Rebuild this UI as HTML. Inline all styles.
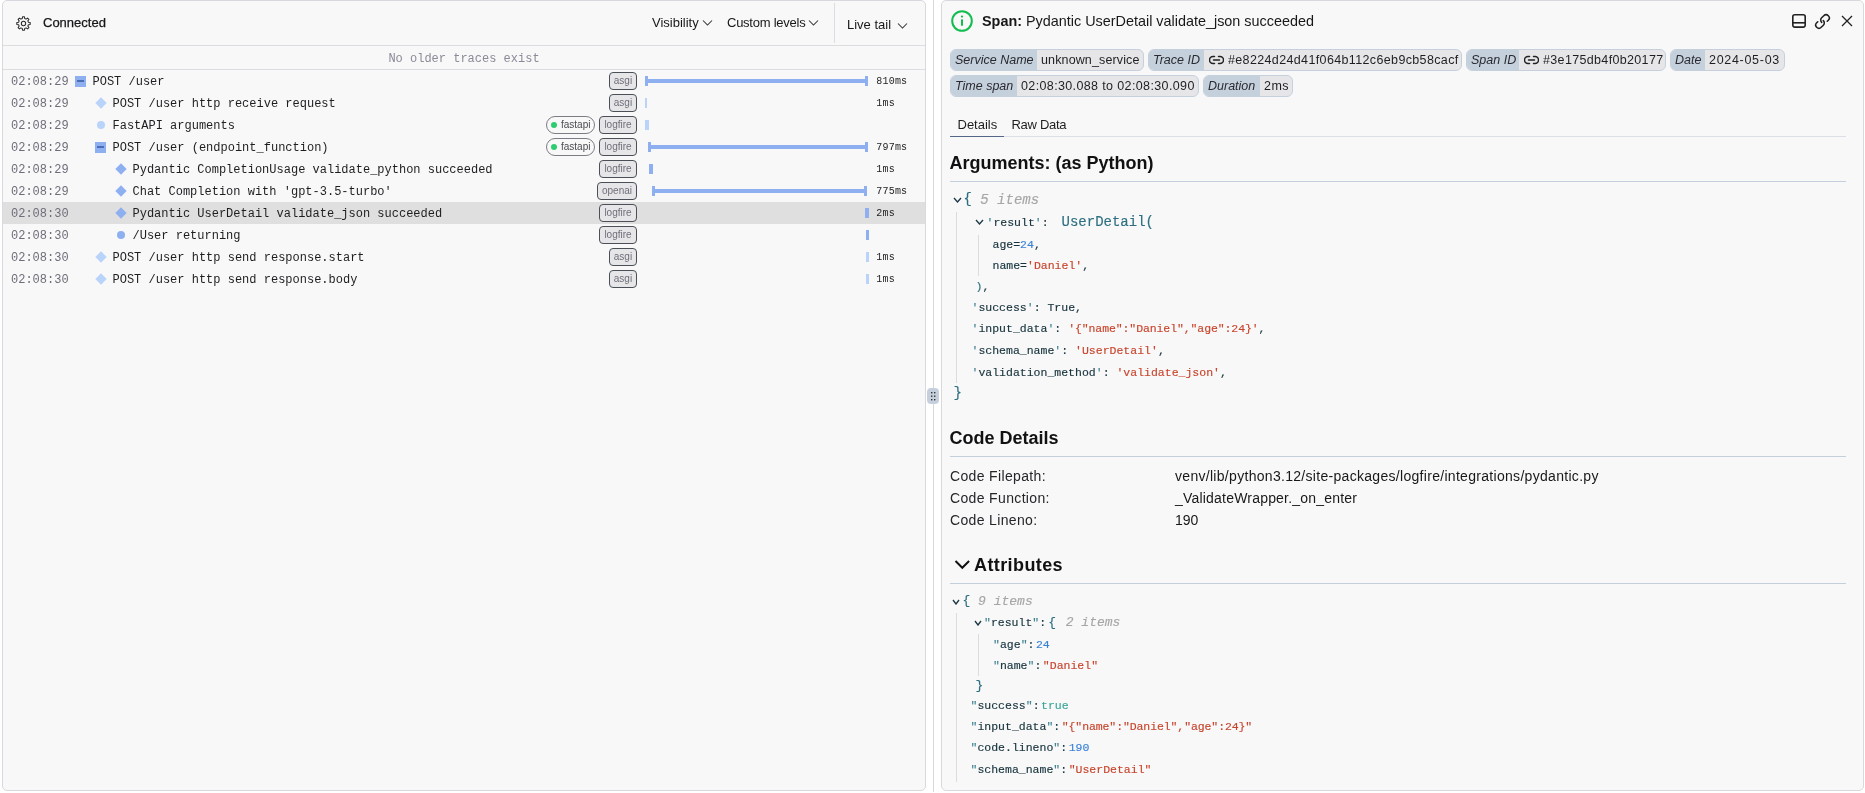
<!DOCTYPE html>
<html><head><meta charset="utf-8">
<style>
*{box-sizing:border-box;margin:0;padding:0}
html,body{width:1865px;height:793px;overflow:hidden;background:#fff;font-family:"Liberation Sans",sans-serif;color:#1b1b1f;position:relative}
.abs{position:absolute}
.panel{position:absolute;top:0;height:791px;background:#f8f8f8;border:1px solid #d8d8de;border-radius:5px}
#lp{left:2px;width:924px}
#rp{left:941px;width:923px}
.t{position:absolute;white-space:nowrap}
.hl{position:absolute;height:1px;background:#dcdce2}
/* left */
.older{position:absolute;left:3px;top:48px;width:922px;height:23px;text-align:center;font-family:"Liberation Mono",monospace;font-size:12px;line-height:23px;color:#8a8a98}
.row{position:absolute;left:3px;width:922px;height:22px}
.row.sel{background:#dfdfdf}
.ts{position:absolute;left:8px;top:1px;line-height:22px;font-family:"Liberation Mono",monospace;font-size:12px;color:#6e6e7a}
.nm{position:absolute;top:1px;line-height:22px;font-family:"Liberation Mono",monospace;font-size:12px;color:#1e1e22;white-space:nowrap}
.sq{position:absolute;top:6px;width:11px;height:11px;background:#8fb0f0}
.sq:after{content:"";position:absolute;left:2px;top:4px;width:7px;height:2px;background:#4a6fb8}
.dia{position:absolute;top:6.6px;width:8px;height:8px;transform:rotate(45deg)}
.cir{position:absolute;top:7px;width:8px;height:8px;border-radius:50%}
.lt{background:#b9d3fb}
.md{background:#8fb0f0}
.tag{position:absolute;top:2px;height:18px;border:1px solid #4b5058;border-radius:4px;background:#e6e6e9;color:#6f6f78;font-size:10px;line-height:16px;text-align:center}
.pill{position:absolute;top:2px;height:18px;border:1px solid #7c7c84;border-radius:9px;color:#4a4a50;font-size:10px;line-height:16px;padding:0 0 0 14px}
.pill:before{content:"";position:absolute;left:4px;top:5px;width:6px;height:6px;border-radius:50%;background:#2ecc71}
.bar{position:absolute}
.dur{position:absolute;left:873.3px;top:1px;line-height:22px;font-family:"Liberation Mono",monospace;font-size:10px;color:#1f1f22;letter-spacing:0.2px}
/* right */
.chip{position:absolute;height:22px;border:1px solid #c5d0dd;border-radius:6px;background:#e6e6e8;overflow:hidden;font-size:12.5px;line-height:20px;white-space:nowrap;color:#1f1f23}
.chip .lb{position:absolute;left:0;top:0;height:20px;background:#c5d0dd;font-style:italic;color:#2a2a30}
.chip .vl{position:absolute;top:0;height:20px}
.h2{position:absolute;left:950px;font-size:18px;font-weight:bold;color:#111114;white-space:nowrap}
.sep{position:absolute;left:950px;width:896px;height:1px;background:#c3cfdc}
.code{font-family:"Liberation Mono",monospace;white-space:nowrap;position:absolute;-webkit-text-stroke:0.15px currentColor}
.k{color:#17333d}
.q{color:#3f8191}
.s{color:#c8452d}
.n{color:#3b82d6}
.b{color:#2d6f80}
.m{color:#a6a6a6;font-style:italic;position:relative;top:0.7px}
.py{color:#284a57}
.tr{color:#3aa59a}
.guide{position:absolute;width:1px;background:#dcdce0}
</style></head>
<body>
<div id="wrap" style="position:absolute;left:0;top:0;width:1865px;height:793px;will-change:transform">
<div class="panel" id="lp"></div>
<div class="panel" id="rp"></div>
<div class="abs" style="left:933px;top:0;width:1px;height:792px;background:#d8d8de"></div>
<div class="abs" style="left:927px;top:388px;width:12px;height:16px;border-radius:4px;background:#c6d0dc"></div>
<svg class="abs" style="left:927px;top:388px" width="12" height="16"><g fill="#333"><rect x="4" y="4" width="1.4" height="1.4"/><rect x="7" y="4" width="1.4" height="1.4"/><rect x="4" y="7.5" width="1.4" height="1.4"/><rect x="7" y="7.5" width="1.4" height="1.4"/><rect x="4" y="11" width="1.4" height="1.4"/><rect x="7" y="11" width="1.4" height="1.4"/></g></svg>

<!-- left header -->
<svg class="abs" style="left:16px;top:16px" width="15" height="15" viewBox="0 0 16 16"><path fill="none" stroke="#2a2a2e" stroke-width="1.1" stroke-linejoin="round" d="M15.13 6.99 L15.13 9.01 L13.23 9.34 L12.65 10.75 L13.76 12.32 L12.32 13.76 L10.75 12.65 L9.34 13.23 L9.01 15.13 L6.99 15.13 L6.66 13.23 L5.25 12.65 L3.68 13.76 L2.24 12.32 L3.35 10.75 L2.77 9.34 L0.87 9.01 L0.87 6.99 L2.77 6.66 L3.35 5.25 L2.24 3.68 L3.68 2.24 L5.25 3.35 L6.66 2.77 L6.99 0.87 L9.01 0.87 L9.34 2.77 L10.75 3.35 L12.32 2.24 L13.76 3.68 L12.65 5.25 L13.23 6.66Z"/><circle cx="8" cy="8" r="2.3" fill="none" stroke="#2a2a2e" stroke-width="1.1"/></svg>
<div class="t" style="left:43px;top:15px;font-size:13px;line-height:16px;color:#18181b;-webkit-text-stroke:0.25px #18181b">Connected</div>
<div class="t" style="left:652px;top:15px;font-size:13px;line-height:16px;color:#18181b">Visibility</div>
<svg class="abs" style="left:702px;top:19px" width="11" height="8"><path d="M1 1.5l4.5 4.5 4.5-4.5" fill="none" stroke="#333" stroke-width="1.05"/></svg>
<div class="t" style="left:727px;top:15px;font-size:13px;line-height:16px;color:#18181b;letter-spacing:-0.25px">Custom levels</div>
<svg class="abs" style="left:808px;top:19px" width="11" height="8"><path d="M1 1.5l4.5 4.5 4.5-4.5" fill="none" stroke="#333" stroke-width="1.05"/></svg>
<div class="abs" style="left:834px;top:3px;width:1px;height:40px;background:#dcdce2"></div>
<div class="t" style="left:847px;top:17px;font-size:13px;line-height:16px;color:#18181b">Live tail</div>
<svg class="abs" style="left:897px;top:22px" width="11" height="8"><path d="M1 1.5l4.5 4.5 4.5-4.5" fill="none" stroke="#333" stroke-width="1.05"/></svg>
<div class="hl" style="left:3px;top:45px;width:922px"></div>
<div class="older">No older traces exist</div>
<div class="hl" style="left:3px;top:69px;width:922px"></div>
<div class="row" style="top:70px"><div class="ts">02:08:29</div><div class="sq" style="left:71.5px"></div><div class="nm" style="left:89.5px">POST /user</div><div class="tag" style="left:606px;width:28px">asgi</div><div class="bar md" style="left:642px;top:6px;width:3px;height:10px"></div><div class="bar md" style="left:642px;top:9px;width:223px;height:4px"></div><div class="bar md" style="left:862px;top:6px;width:3px;height:10px"></div><div class="dur">810ms</div></div>
<div class="row" style="top:92px"><div class="ts">02:08:29</div><div class="dia lt" style="left:93.7px"></div><div class="nm" style="left:109.5px">POST /user http receive request</div><div class="tag" style="left:606px;width:28px">asgi</div><div class="bar lt" style="left:642px;top:6px;width:2px;height:10px"></div><div class="dur">1ms</div></div>
<div class="row" style="top:114px"><div class="ts">02:08:29</div><div class="cir lt" style="left:93.5px"></div><div class="nm" style="left:109.5px">FastAPI arguments</div><div class="pill" style="left:543px;width:49px">fastapi</div><div class="tag" style="left:596px;width:38px">logfire</div><div class="bar lt" style="left:642px;top:6px;width:4px;height:10px"></div></div>
<div class="row" style="top:136px"><div class="ts">02:08:29</div><div class="sq" style="left:91.5px"></div><div class="nm" style="left:109.5px">POST /user (endpoint_function)</div><div class="pill" style="left:543px;width:49px">fastapi</div><div class="tag" style="left:596px;width:38px">logfire</div><div class="bar md" style="left:645px;top:6px;width:3px;height:10px"></div><div class="bar md" style="left:645px;top:9px;width:220px;height:4px"></div><div class="bar md" style="left:862px;top:6px;width:3px;height:10px"></div><div class="dur">797ms</div></div>
<div class="row" style="top:158px"><div class="ts">02:08:29</div><div class="dia md" style="left:113.7px"></div><div class="nm" style="left:129.5px">Pydantic CompletionUsage validate_python succeeded</div><div class="tag" style="left:596px;width:38px">logfire</div><div class="bar md" style="left:646px;top:6px;width:4px;height:10px"></div><div class="dur">1ms</div></div>
<div class="row" style="top:180px"><div class="ts">02:08:29</div><div class="dia md" style="left:113.7px"></div><div class="nm" style="left:129.5px">Chat Completion with 'gpt-3.5-turbo'</div><div class="tag" style="left:594px;width:40px">openai</div><div class="bar md" style="left:649px;top:6px;width:3px;height:10px"></div><div class="bar md" style="left:649px;top:9px;width:215px;height:4px"></div><div class="bar md" style="left:861px;top:6px;width:3px;height:10px"></div><div class="dur">775ms</div></div>
<div class="row sel" style="top:202px"><div class="ts">02:08:30</div><div class="dia md" style="left:113.7px"></div><div class="nm" style="left:129.5px">Pydantic UserDetail validate_json succeeded</div><div class="tag" style="left:596px;width:38px">logfire</div><div class="bar md" style="left:862px;top:6px;width:4px;height:10px"></div><div class="dur">2ms</div></div>
<div class="row" style="top:224px"><div class="ts">02:08:30</div><div class="cir md" style="left:113.5px"></div><div class="nm" style="left:129.5px">/User returning</div><div class="tag" style="left:596px;width:38px">logfire</div><div class="bar md" style="left:863px;top:6px;width:3px;height:10px"></div></div>
<div class="row" style="top:246px"><div class="ts">02:08:30</div><div class="dia lt" style="left:93.7px"></div><div class="nm" style="left:109.5px">POST /user http send response.start</div><div class="tag" style="left:606px;width:28px">asgi</div><div class="bar lt" style="left:863px;top:6px;width:3px;height:10px"></div><div class="dur">1ms</div></div>
<div class="row" style="top:268px"><div class="ts">02:08:30</div><div class="dia lt" style="left:93.7px"></div><div class="nm" style="left:109.5px">POST /user http send response.body</div><div class="tag" style="left:606px;width:28px">asgi</div><div class="bar lt" style="left:863px;top:6px;width:3px;height:10px"></div><div class="dur">1ms</div></div>

<!-- right header -->
<svg class="abs" style="left:950px;top:9px" width="24" height="24" viewBox="0 0 24 24"><circle cx="12" cy="12" r="9.8" fill="none" stroke="#12bd4f" stroke-width="2"/><rect x="11" y="10.3" width="2" height="6.5" rx="0.5" fill="#12bd4f"/><circle cx="12" cy="7.6" r="1.1" fill="#12bd4f"/></svg>
<div class="t" style="left:982px;top:13px;font-size:14.4px;line-height:17px;color:#18181b"><b>Span:</b> Pydantic UserDetail validate_json succeeded</div>
<svg class="abs" style="left:1791px;top:13px" width="16" height="16" viewBox="0 0 16 16"><rect x="1.8" y="1.7" width="12.4" height="12.4" rx="2" fill="none" stroke="#222" stroke-width="1.6"/><path d="M1.8 9.8h12.4" stroke="#222" stroke-width="1.6"/></svg>
<svg class="abs" style="left:1814px;top:13px" width="17" height="17" viewBox="0 0 24 24"><path fill="none" stroke="#222" stroke-width="2.2" stroke-linecap="round" d="M13.2 10.8a4.5 4.5 0 0 1 0 6.4l-3 3a4.5 4.5 0 0 1-6.4-6.4l1.5-1.5M10.8 13.2a4.5 4.5 0 0 1 0-6.4l3-3a4.5 4.5 0 0 1 6.4 6.4l-1.5 1.5"/></svg>
<svg class="abs" style="left:1840px;top:14px" width="14" height="14" viewBox="0 0 14 14"><path d="M2 2l10 10M12 2L2 12" stroke="#222" stroke-width="1.3"/></svg>

<div class="chip" style="left:950px;top:49px;width:194px"><div class="lb" style="width:86px;padding-left:4px">Service Name</div><div class="vl" style="left:90px;letter-spacing:0.13px">unknown_service</div></div>
<div class="chip" style="left:1148px;top:49px;width:314px"><div class="lb" style="width:55px;padding-left:4px">Trace ID</div><svg class="abs" style="left:59.5px;top:3px" width="15" height="14" viewBox="0 0 15 14"><path d="M5.5 3.5H4a3.5 3.5 0 0 0 0 7h1.5M9.5 3.5H11a3.5 3.5 0 0 1 0 7H9.5M4.5 7h6" fill="none" stroke="#222" stroke-width="1.5" stroke-linecap="round"/></svg><div class="vl" style="left:79px;letter-spacing:0.36px">#e8224d24d41f064b112c6eb9cb58cacf</div></div>
<div class="chip" style="left:1466px;top:49px;width:200px"><div class="lb" style="width:52px;padding-left:4px">Span ID</div><svg class="abs" style="left:56.5px;top:3px" width="15" height="14" viewBox="0 0 15 14"><path d="M5.5 3.5H4a3.5 3.5 0 0 0 0 7h1.5M9.5 3.5H11a3.5 3.5 0 0 1 0 7H9.5M4.5 7h6" fill="none" stroke="#222" stroke-width="1.5" stroke-linecap="round"/></svg><div class="vl" style="left:76px;letter-spacing:0.34px">#3e175db4f0b20177</div></div>
<div class="chip" style="left:1670px;top:49px;width:115px"><div class="lb" style="width:34px;padding-left:4px">Date</div><div class="vl" style="left:38px;letter-spacing:0.7px">2024-05-03</div></div>
<div class="chip" style="left:950px;top:75px;width:249px"><div class="lb" style="width:66px;padding-left:4px">Time span</div><div class="vl" style="left:70px;letter-spacing:0.37px">02:08:30.088 to 02:08:30.090</div></div>
<div class="chip" style="left:1203px;top:75px;width:90px"><div class="lb" style="width:56px;padding-left:4px">Duration</div><div class="vl" style="left:60px;letter-spacing:0.5px">2ms</div></div>

<!-- tabs -->
<div class="t" style="left:957.5px;top:117px;font-size:13px;line-height:16px;color:#1f1f23">Details</div>
<div class="t" style="left:1011.5px;top:117px;font-size:13px;line-height:16px;color:#1f1f23;letter-spacing:-0.3px">Raw Data</div>
<div class="abs" style="left:950px;top:136px;width:896px;height:1px;background:#dcdfe5"></div>
<div class="abs" style="left:950px;top:135.6px;width:54px;height:1.6px;background:#55688a"></div>

<div class="h2" style="left:949.5px;top:152px;line-height:22px">Arguments: (as Python)</div>
<div class="sep" style="top:181px"></div>
<svg class="abs" style="left:952.5px;top:197px" width="9" height="6" viewBox="-1 -1 9 6"><path d="M0 0L3.5 4L7 0" fill="none" stroke="#1d3a45" stroke-width="1.35"/></svg>
<div class="code" style="left:963.5px;top:188px;line-height:22px;font-size:11.5px"><span class="b" style="font-size:14px">{</span><span class="m" style="font-size:14px"> 5 items</span></div>
<svg class="abs" style="left:974.5px;top:219px" width="9" height="6" viewBox="-1 -1 9 6"><path d="M0 0L3.5 4L7 0" fill="none" stroke="#1d3a45" stroke-width="1.35"/></svg>
<div class="code" style="left:986.5px;top:210.5px;line-height:22px;font-size:11.5px"><span class="q">'</span><span class="k">result</span><span class="q">'</span><span class="k">: </span><span class="b" style="font-size:14px;margin-left:6px">UserDetail(</span></div>
<div class="code" style="left:992.5px;top:233.5px;line-height:22px;font-size:11.5px"><span class="k">age=</span><span class="n">24</span><span class="k">,</span></div>
<div class="code" style="left:992.5px;top:255px;line-height:22px;font-size:11.5px"><span class="k">name=</span><span class="s">'Daniel'</span><span class="k">,</span></div>
<div class="code" style="left:975.5px;top:276px;line-height:22px;font-size:11.5px"><span class="b">)</span><span class="k">,</span></div>
<div class="code" style="left:971.5px;top:297px;line-height:22px;font-size:11.5px"><span class="q">'</span><span class="k">success</span><span class="q">'</span><span class="k">: True,</span></div>
<div class="code" style="left:971.5px;top:318px;line-height:22px;font-size:11.5px"><span class="q">'</span><span class="k">input_data</span><span class="q">'</span><span class="k">: </span><span class="s" style="letter-spacing:-0.1px">'{"name":"Daniel","age":24}'</span><span class="k">,</span></div>
<div class="code" style="left:971.5px;top:340px;line-height:22px;font-size:11.5px"><span class="q">'</span><span class="k">schema_name</span><span class="q">'</span><span class="k">: </span><span class="s">'UserDetail'</span><span class="k">,</span></div>
<div class="code" style="left:971.5px;top:362px;line-height:22px;font-size:11.5px"><span class="q">'</span><span class="k">validation_method</span><span class="q">'</span><span class="k">: </span><span class="s">'validate_json'</span><span class="k">,</span></div>
<div class="code" style="left:953.5px;top:382px;line-height:22px;font-size:11.5px"><span class="b" style="font-size:14px">}</span></div>
<div class="guide" style="left:956px;top:212px;height:171px"></div>
<div class="guide" style="left:978px;top:235px;height:41px"></div>

<div class="h2" style="left:949.5px;top:427px;line-height:22px">Code Details</div>
<div class="sep" style="top:456px"></div>
<div class="t" style="left:950px;top:467px;font-size:14px;line-height:18px;color:#25252a;letter-spacing:0.35px">Code Filepath:</div>
<div class="t" style="left:950px;top:489px;font-size:14px;line-height:18px;color:#25252a;letter-spacing:0.35px">Code Function:</div>
<div class="t" style="left:950px;top:511px;font-size:14px;line-height:18px;color:#25252a;letter-spacing:0.35px">Code Lineno:</div>
<div class="t" style="left:1175px;top:467px;font-size:14px;line-height:18px;color:#18181b;letter-spacing:0.3px">venv/lib/python3.12/site-packages/logfire/integrations/pydantic.py</div>
<div class="t" style="left:1175px;top:489px;font-size:14px;line-height:18px;color:#18181b;letter-spacing:0.2px">_ValidateWrapper._on_enter</div>
<div class="t" style="left:1175px;top:511px;font-size:14px;line-height:18px;color:#18181b">190</div>

<svg class="abs" style="left:953px;top:558px" width="18" height="13" viewBox="0 0 18 13"><path d="M2.5 3l6.8 6.8L16.1 3" fill="none" stroke="#111" stroke-width="2"/></svg>
<div class="h2" style="left:974px;top:553.5px;line-height:22px;letter-spacing:0.4px">Attributes</div>
<div class="sep" style="top:583px"></div>
<svg class="abs" style="left:952px;top:599px" width="8" height="6" viewBox="-1 -1 8 6"><path d="M0 0L3.0 4L6 0" fill="none" stroke="#1d3a45" stroke-width="1.35"/></svg>
<div class="code" style="left:962.5px;top:590px;line-height:22px;font-size:11.5px"><span class="b" style="font-size:13px">{</span><span class="m" style="font-size:13px"> 9 items</span></div>
<svg class="abs" style="left:974px;top:619.5px" width="8" height="6" viewBox="-1 -1 8 6"><path d="M0 0L3.0 4L6 0" fill="none" stroke="#1d3a45" stroke-width="1.35"/></svg>
<div class="code" style="left:984px;top:611.7px;line-height:22px;font-size:11.5px"><span class="q">"</span><span class="k">result</span><span class="q">"</span><span class="k">:</span><span class="b" style="font-size:13px;margin-left:2px">{</span><span class="m" style="font-size:13px;margin-left:2px"> 2 items</span></div>
<div class="code" style="left:993px;top:633.7px;line-height:22px;font-size:11.5px"><span class="q">"</span><span class="k">age</span><span class="q">"</span><span class="k">:</span><span class="n" style="margin-left:1.5px">24</span></div>
<div class="code" style="left:993px;top:654.7px;line-height:22px;font-size:11.5px"><span class="q">"</span><span class="k">name</span><span class="q">"</span><span class="k">:</span><span class="s" style="margin-left:1.5px">"Daniel"</span></div>
<div class="code" style="left:975.5px;top:675px;line-height:22px;font-size:11.5px"><span class="b" style="font-size:13px">}</span></div>
<div class="code" style="left:970.5px;top:694.5px;line-height:22px;font-size:11.5px"><span class="q">"</span><span class="k">success</span><span class="q">"</span><span class="k">:</span><span class="tr" style="margin-left:1.5px">true</span></div>
<div class="code" style="left:970.5px;top:716px;line-height:22px;font-size:11.5px"><span class="q">"</span><span class="k">input_data</span><span class="q">"</span><span class="k">:</span><span class="s" style="margin-left:1.5px;letter-spacing:-0.1px">"{"name":"Daniel","age":24}"</span></div>
<div class="code" style="left:970.5px;top:737px;line-height:22px;font-size:11.5px"><span class="q">"</span><span class="k">code.lineno</span><span class="q">"</span><span class="k">:</span><span class="n" style="margin-left:1.5px">190</span></div>
<div class="code" style="left:970.5px;top:759px;line-height:22px;font-size:11.5px"><span class="q">"</span><span class="k">schema_name</span><span class="q">"</span><span class="k">:</span><span class="s" style="margin-left:1.5px">"UserDetail"</span></div>
<div class="guide" style="left:956px;top:613px;height:169px"></div>
<div class="guide" style="left:978px;top:634px;height:42px"></div>
</div>
</body></html>
